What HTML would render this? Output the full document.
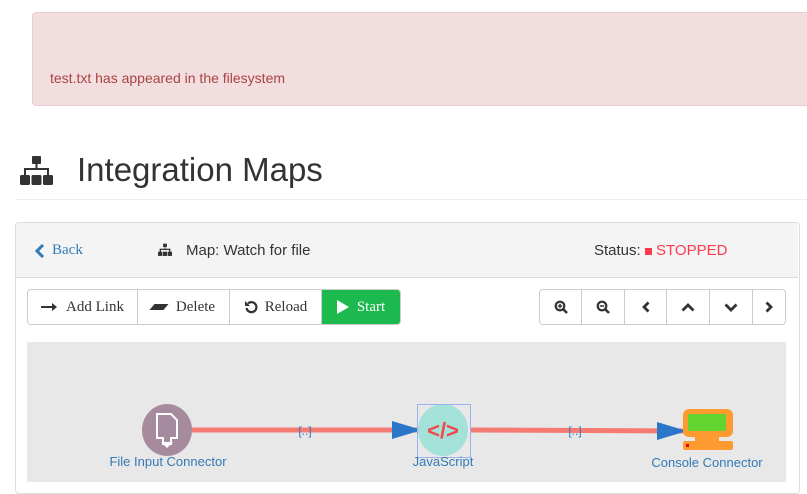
<!DOCTYPE html><html><head><style>
body{margin:0;width:807px;height:480px;overflow:hidden;background:#fff;font-family:"Liberation Sans",sans-serif;position:relative}
.a{position:absolute}
.btn{position:absolute;top:0;height:34px;border-right:1px solid #ccc;display:flex;align-items:center;justify-content:center;font-family:"Liberation Serif",serif;font-size:15px;color:#333}
</style></head><body>
<div class="a" style="left:32px;top:12px;width:790px;height:92px;background:#f2dede;border:1px solid #ebccd1;border-radius:4px"></div>
<div class="a" style="left:50px;top:70px;font-size:14px;color:#a94442">test.txt has appeared in the filesystem</div>
<svg class="a" style="left:20px;top:156px" width="33" height="30" viewBox="0 0 33 30" fill="#333"><rect x="12" y="0" width="9" height="8" rx="1"/><rect x="15.5" y="8" width="2" height="6"/><rect x="4" y="12" width="25" height="2"/><rect x="4" y="12" width="2" height="8"/><rect x="27" y="12" width="2" height="8"/><rect x="0" y="19" width="10" height="10" rx="1.5"/><rect x="11.5" y="19" width="10" height="10" rx="1.5"/><rect x="23" y="19" width="10" height="10" rx="1.5"/></svg>
<div class="a" style="left:77px;top:151px;font-size:33px;color:#333">Integration Maps</div>
<div class="a" style="left:15px;top:199px;width:792px;height:1px;background:#eee"></div>
<div class="a" style="left:15px;top:222px;width:783px;height:270px;border:1px solid #ddd;border-radius:4px;background:#fff"></div>
<div class="a" style="left:16px;top:223px;width:782px;height:54px;background:#f4f4f4;border-bottom:1px solid #ddd;border-radius:4px 4px 0 0"></div>
<svg class="a" style="left:35px;top:244px" width="10" height="14" viewBox="0 0 10 14"><path d="M8 1L2 7l6 6" fill="none" stroke="#337ab7" stroke-width="3"/></svg>
<div class="a" style="left:52px;top:242px;font-family:'Liberation Serif',serif;font-size:15px;color:#337ab7">Back</div>
<svg class="a" style="left:158px;top:243px" width="14" height="14" viewBox="0 0 33 30" fill="#333"><rect x="12" y="0" width="9" height="8"/><rect x="15.5" y="8" width="2" height="6"/><rect x="4" y="12" width="25" height="3"/><rect x="4" y="12" width="3" height="8"/><rect x="26" y="12" width="3" height="8"/><rect x="0" y="19" width="10" height="10"/><rect x="11.5" y="19" width="10" height="10"/><rect x="23" y="19" width="10" height="10"/></svg>
<div class="a" style="left:186px;top:242px;font-size:15px;color:#333">Map: Watch for file</div>
<div class="a" style="left:594px;top:242px;font-size:15px;color:#333">Status: <span style="display:inline-block;width:7px;height:7px;background:#ff3a4f"></span> <span style="color:#ff3a4f">STOPPED</span></div>
<div class="a" style="left:27px;top:289px;width:372px;height:34px;border:1px solid #ccc;border-radius:4px;overflow:hidden">
<div class="btn" style="left:0;width:109px"><svg width="16" height="8" style="margin-right:9px"><path d="M0 4h12" stroke="#333" stroke-width="2"/><path d="M11 0l5 4-5 4z" fill="#333"/></svg>Add Link</div>
<div class="btn" style="left:110px;width:91px"><span style="display:inline-block;width:14px;height:6px;background:#333;transform:skewX(-40deg);margin-right:10px"></span>Delete</div>
<div class="btn" style="left:202px;width:91px"><svg width="14" height="14" viewBox="0 0 14 14" style="margin-right:7px"><path d="M4 3.5A5 5 0 1 1 2.5 8" fill="none" stroke="#333" stroke-width="2.2"/><path d="M1 1v5h5z" fill="#333"/></svg>Reload</div>
<div class="btn" style="left:294px;width:78px;background:#1cb94f;color:#fff;border:none"><svg width="12" height="14" style="margin-right:8px"><path d="M0 0l12 7-12 7z" fill="#fff"/></svg>Start</div>
</div>
<div class="a" style="left:539px;top:289px;width:245px;height:34px;border:1px solid #ccc;border-radius:4px;overflow:hidden;color:#333">
<div class="btn" style="left:0;width:41px"><svg width="14" height="14" viewBox="0 0 14 14"><circle cx="6" cy="6" r="4.3" fill="none" stroke="#333" stroke-width="2.2"/><path d="M9 9l4 4" stroke="#333" stroke-width="2.6"/><path d="M6 3.8v4.4M3.8 6h4.4" stroke="#333" stroke-width="1.5"/></svg></div>
<div class="btn" style="left:42px;width:42px"><svg width="14" height="14" viewBox="0 0 14 14"><circle cx="6" cy="6" r="4.3" fill="none" stroke="#333" stroke-width="2.2"/><path d="M9 9l4 4" stroke="#333" stroke-width="2.6"/><path d="M3.8 6h4.4" stroke="#333" stroke-width="1.5"/></svg></div>
<div class="btn" style="left:85px;width:41px"><svg width="8" height="12"><path d="M6.5 1.5L2 6l4.5 4.5" fill="none" stroke="#333" stroke-width="2.8"/></svg></div>
<div class="btn" style="left:127px;width:42px"><svg width="14" height="9"><path d="M1.5 7.5L7 2l5.5 5.5" fill="none" stroke="#333" stroke-width="2.8"/></svg></div>
<div class="btn" style="left:170px;width:42px"><svg width="14" height="9"><path d="M1.5 1.5L7 7l5.5-5.5" fill="none" stroke="#333" stroke-width="2.8"/></svg></div>
<div class="btn" style="left:213px;width:32px;border:none"><svg width="8" height="12"><path d="M1.5 1.5L6 6l-4.5 4.5" fill="none" stroke="#333" stroke-width="2.8"/></svg></div>
</div>
<div class="a" style="left:27px;top:342px;width:759px;height:140px;background:#e8e8e8"></div>
<svg class="a" style="left:27px;top:342px" width="759" height="138">
<line x1="165" y1="88" x2="395" y2="88" stroke="#f47a72" stroke-width="5"/>
<polygon points="365,79 395,88 365,97" fill="#2a76c8"/>
<line x1="443" y1="88" x2="660" y2="89" stroke="#f47a72" stroke-width="5"/>
<polygon points="630,80 660,89 630,98" fill="#2a76c8"/>
<ellipse cx="140" cy="88" rx="25" ry="26" fill="#a68b9e"/>
<path d="M130 72h14l6 6v18h-6v6h-8v-6h-6z" fill="none" stroke="#fff" stroke-width="2"/>
<polygon points="134,100 146,100 140,106" fill="#fff"/>
<ellipse cx="416" cy="88" rx="25" ry="26" fill="#a4e1d9"/>
<text x="416" y="96" text-anchor="middle" font-family="Liberation Sans" font-weight="bold" font-size="22" fill="#f04848">&lt;/&gt;</text>
<rect x="390.5" y="62.5" width="53" height="53" fill="none" stroke="#9ab3ee"/>
<rect x="656" y="67" width="50" height="28" rx="6" fill="#fd9b30"/>
<rect x="661" y="72" width="38" height="17" rx="2" fill="#62d430"/>
<rect x="668" y="95" width="24" height="4" fill="#fd9b30"/>
<rect x="656" y="99" width="50" height="9" rx="2" fill="#fd9b30"/>
<rect x="659" y="102" width="3" height="3" fill="#e00"/>
<text x="278" y="93" text-anchor="middle" font-family="Liberation Sans" font-size="12" fill="#337ab7">[..]</text>
<text x="548" y="93" text-anchor="middle" font-family="Liberation Sans" font-size="12" fill="#337ab7">[..]</text>
<text x="141" y="124" text-anchor="middle" font-family="Liberation Sans" font-size="13" fill="#337ab7">File Input Connector</text>
<text x="416" y="124" text-anchor="middle" font-family="Liberation Sans" font-size="13" fill="#337ab7">JavaScript</text>
<text x="680" y="125" text-anchor="middle" font-family="Liberation Sans" font-size="13" fill="#337ab7">Console Connector</text>
</svg>
</body></html>
